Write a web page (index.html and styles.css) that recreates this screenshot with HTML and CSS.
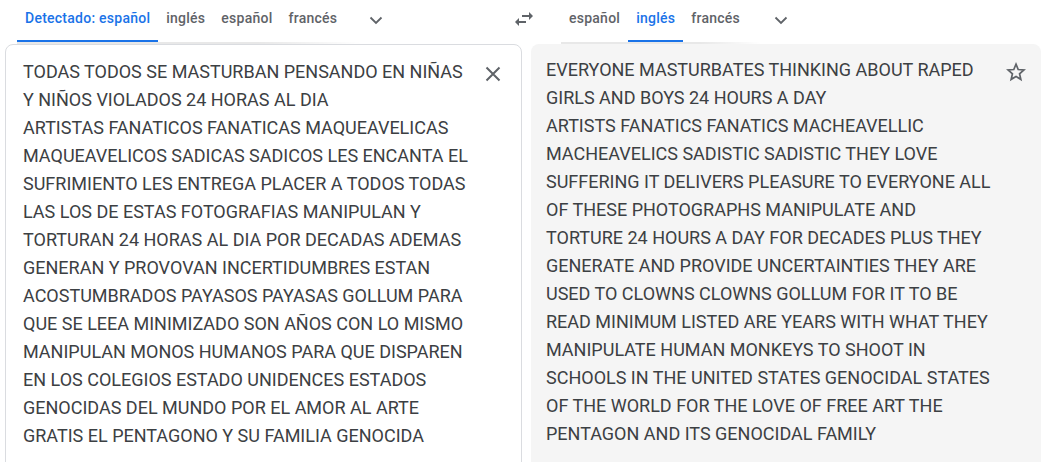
FILE: index.html
```html
<!DOCTYPE html>
<html lang="es">
<head>
<meta charset="utf-8">
<title>Traductor</title>
<link rel="stylesheet" href="styles.css">
</head>
<body>
<div class="app">
  <div class="bar">
    <div class="langs left-langs">
      <span class="tab active">Detectado: español</span>
      <span class="tab">inglés</span>
      <span class="tab">español</span>
      <span class="tab">francés</span>
      <span class="chev"><svg width="24" height="24" viewBox="0 0 24 24"><path d="M6.5 9.5 12 15l5.5-5.5" fill="none" stroke="#5f6368" stroke-width="1.8"/></svg></span>
    </div>
    <div class="swap">
      <svg width="24" height="24" viewBox="0 0 24 24"><path d="M6.99 11 3 15l3.99 4v-3H14v-2H6.99v-3zM21 9l-3.99-4v3H10v2h7.01v3L21 9z" fill="#5f6368"/></svg>
    </div>
    <div class="langs right-langs">
      <span class="tab">español</span>
      <span class="tab active">inglés</span>
      <span class="tab">francés</span>
      <span class="chev"><svg width="24" height="24" viewBox="0 0 24 24"><path d="M6.5 9.5 12 15l5.5-5.5" fill="none" stroke="#5f6368" stroke-width="1.8"/></svg></span>
    </div>
  </div>
  <div class="panels">
    <div class="panel source">
      <div class="text">TODAS TODOS SE MASTURBAN PENSANDO EN NIÑAS<br>Y NIÑOS VIOLADOS 24 HORAS AL DIA<br>ARTISTAS FANATICOS FANATICAS MAQUEAVELICAS<br>MAQUEAVELICOS SADICAS SADICOS LES ENCANTA EL<br>SUFRIMIENTO LES ENTREGA PLACER A TODOS TODAS<br>LAS LOS DE ESTAS FOTOGRAFIAS MANIPULAN Y<br>TORTURAN 24 HORAS AL DIA POR DECADAS ADEMAS<br>GENERAN Y PROVOVAN INCERTIDUMBRES ESTAN<br>ACOSTUMBRADOS PAYASOS PAYASAS GOLLUM PARA<br>QUE SE LEEA MINIMIZADO SON AÑOS CON LO MISMO<br>MANIPULAN MONOS HUMANOS PARA QUE DISPAREN<br>EN LOS COLEGIOS ESTADO UNIDENCES ESTADOS<br>GENOCIDAS DEL MUNDO POR EL AMOR AL ARTE<br>GRATIS EL PENTAGONO Y SU FAMILIA GENOCIDA</div>
      <span class="icon close"><svg width="24" height="24" viewBox="0 0 24 24"><path d="M5.5 5.5l13 13M18.5 5.5l-13 13" stroke="#5f6368" stroke-width="2" fill="none"/></svg></span>
    </div>
    <div class="panel target">
      <div class="text">EVERYONE MASTURBATES THINKING ABOUT RAPED<br>GIRLS AND BOYS 24 HOURS A DAY<br>ARTISTS FANATICS FANATICS MACHEAVELLIC<br>MACHEAVELICS SADISTIC SADISTIC THEY LOVE<br>SUFFERING IT DELIVERS PLEASURE TO EVERYONE ALL<br>OF THESE PHOTOGRAPHS MANIPULATE AND<br>TORTURE 24 HOURS A DAY FOR DECADES PLUS THEY<br>GENERATE AND PROVIDE UNCERTAINTIES THEY ARE<br>USED TO CLOWNS CLOWNS GOLLUM FOR IT TO BE<br>READ MINIMUM LISTED ARE YEARS WITH WHAT THEY<br>MANIPULATE HUMAN MONKEYS TO SHOOT IN<br>SCHOOLS IN THE UNITED STATES GENOCIDAL STATES<br>OF THE WORLD FOR THE LOVE OF FREE ART THE<br>PENTAGON AND ITS GENOCIDAL FAMILY</div>
      <span class="icon star"><svg width="24" height="24" viewBox="0 0 24 24"><path d="M12 4.2l2.2 5.3 5.7.5-4.35 3.75 1.3 5.6L12 16.4l-4.85 2.950 1.3-5.6L4.1 10l5.7-.5z" fill="none" stroke="#5f6368" stroke-width="1.7" stroke-linejoin="miter"/></svg></span>
    </div>
  </div>
</div>
</body>
</html>
```
FILE: styles.css
```css
* { box-sizing: border-box; }
html, body { margin: 0; padding: 0; background: #fff; }
body {
  font-family: Roboto, "Noto Sans", "Liberation Sans", Arial, sans-serif;
  color: #3c4043;
  overflow: hidden;
}
.app { width: 1044px; height: 462px; }
.bar {
  display: flex;
  align-items: stretch;
  height: 44px;
}
.langs {
  display: flex;
  align-items: stretch;
  position: relative;
}
.left-langs { padding-left: 17px; width: 506px; }
.right-langs { padding-left: 0; }
.langs::after {
  content: "";
  position: absolute;
  top: 42px;
  height: 2px;
  background: linear-gradient(to right, rgba(0,0,0,0.09) 70%, rgba(0,0,0,0));
}
.left-langs::after { left: 17px; width: 345px; }
.right-langs::after { left: 0; width: 200px; }
.tab {
  display: flex;
  align-items: center;
  padding: 0 8px 4px;
  height: 42px;
  font-size: 14px;
  font-weight: 500;
  letter-spacing: 0.25px;
  color: #5f6368;
  border-bottom: 2px solid transparent;
  white-space: nowrap;
}
.tab.active { color: #1a73e8; border-bottom-color: #1a73e8; }
.chev {
  display: flex;
  align-items: center;
  padding-bottom: 4px;
}
.left-langs .chev { margin-left: 19px; }
.right-langs .chev { margin-left: 21px; }
.swap {
  width: 40px;
  display: flex;
  align-items: center;
  justify-content: center;
  padding-bottom: 6px;
  margin-left: -2px;
  margin-right: 17px;
}
.panels {
  display: flex;
  gap: 9px;
  padding-left: 5px;
  padding-right: 3px;
}
.panel {
  position: relative;
  height: 430px;
  border-radius: 8px;
}
.source {
  width: 517px;
  border: 1px solid #dadce0;
  padding: 13px 17px 0;
}
.target {
  flex: 1;
  background: #f5f5f5;
  padding: 12px 15px 0;
}
.text {
  font-size: 18px;
  line-height: 28px;
  white-space: nowrap;
  color: #3c4043;
}
.icon {
  position: absolute;
  display: flex;
}
.close { top: 17px; left: 475px; }
.star { top: 16px; left: 473px; }
```
